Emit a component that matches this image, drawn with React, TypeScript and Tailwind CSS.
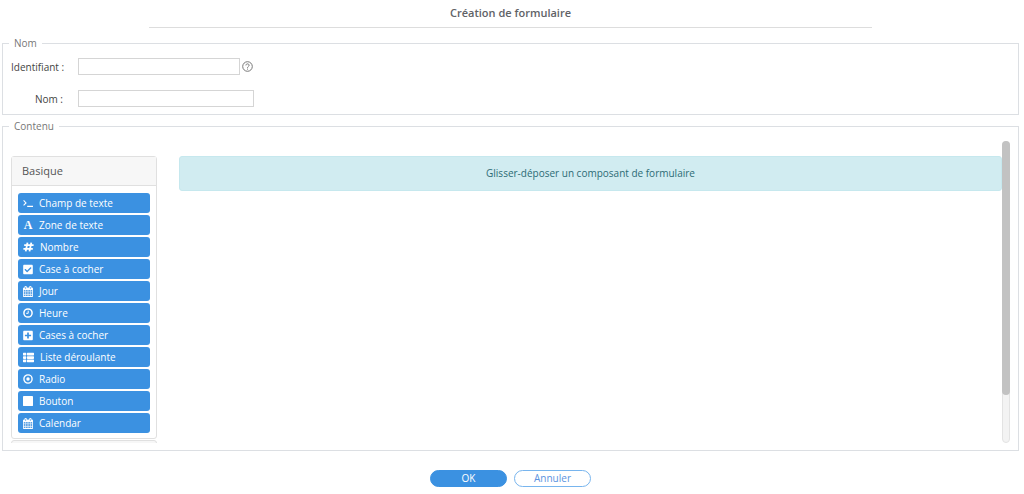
import React, { useState } from "react";
import { FaCheckSquare, FaPlusSquare, FaThList } from "react-icons/fa";

const TerminalIcon = () => (
  <svg width="10" height="10" viewBox="0 0 10 10" fill="none" stroke="currentColor" strokeWidth="1.1">
    <path d="M0.6 2.4L3 4.9L0.6 7.4M4.2 8.4H10" />
  </svg>
);

const HashIcon = () => (
  <svg width="11" height="10" viewBox="0 0 11 10" fill="none" stroke="currentColor" strokeWidth="1.8">
    <path d="M4.5 0.6L2.7 9.4M8.3 0.6L6.5 9.4M1.2 3.2H10.6M0.4 6.8H9.8" />
  </svg>
);

const CalendarIcon = () => (
  <svg width="10" height="11" viewBox="64 0 1664 1792" fill="currentColor">
    <path d="M192 1664h288v-288h-288v288zm352 0h320v-288h-320v288zm-352-352h288v-320h-288v320zm352 0h320v-320h-320v320zm-352-384h288v-288h-288v288zm736 736h320v-288h-320v288zm-384-736h320v-288h-320v288zm768 736h288v-288h-288v288zm-384-352h320v-320h-320v320zm-352-864v-288q0-13-9.5-22.5t-22.5-9.5h-64q-13 0-22.5 9.5t-9.5 22.5v288q0 13 9.5 22.5t22.5 9.5h64q13 0 22.5-9.5t9.5-22.5zm736 864h288v-320h-288v320zm-384-384h320v-288h-320v288zm384 0h288v-288h-288v288zm32-480v-288q0-13-9.5-22.5t-22.5-9.5h-64q-13 0-22.5 9.5t-9.5 22.5v288q0 13 9.5 22.5t22.5 9.5h64q13 0 22.5-9.5t9.5-22.5zm384-64v1280q0 52-38 90t-90 38h-1408q-52 0-90-38t-38-90v-1280q0-52 38-90t90-38h128v-96q0-66 47-113t113-47h64q66 0 113 47t47 113v96h384v-96q0-66 47-113t113-47h64q66 0 113 47t47 113v96h128q52 0 90 38t38 90z" stroke="currentColor" strokeWidth="40" />
  </svg>
);

const ClockIcon = () => (
  <svg width="10" height="10" viewBox="0 0 10 10" fill="none" stroke="currentColor">
    <circle cx="5" cy="5" r="4.1" strokeWidth="1.5" />
    <path d="M5.2 2.6V5.3H3.2" strokeWidth="1" />
  </svg>
);

const RadioIcon = () => (
  <svg width="10" height="10" viewBox="0 0 10 10" fill="none" stroke="currentColor">
    <circle cx="5" cy="5" r="4.1" strokeWidth="1.4" />
    <circle cx="5" cy="5" r="1.7" fill="currentColor" stroke="none" />
  </svg>
);

const StopIcon = () => (
  <svg width="10" height="10" viewBox="0 0 10 10" fill="currentColor">
    <rect x="0" y="0" width="10" height="10" rx="0.4" />
  </svg>
);

const HelpIcon = () => (
  <svg width="11" height="11" viewBox="0 0 11 11" fill="none" stroke="currentColor" strokeWidth="1">
    <circle cx="5.5" cy="5.5" r="4.8" />
    <path d="M3.9 4.4C3.9 2.4 7.1 2.4 7.1 4.3C7.1 5.5 5.5 5.5 5.5 6.8M5.5 7.6V8.6" />
  </svg>
);

const components = [
  { label: "Champ de texte", icon: <TerminalIcon /> },
  { label: "Zone de texte", icon: <span aria-hidden="true" className="w-2.5 text-center font-['Liberation_Serif',serif] text-[12px] font-bold">A</span> },
  { label: "Nombre", icon: <HashIcon /> },
  { label: "Case à cocher", icon: <FaCheckSquare className="h-[11px] w-2.5" /> },
  { label: "Jour", icon: <CalendarIcon /> },
  { label: "Heure", icon: <ClockIcon /> },
  { label: "Cases à cocher", icon: <FaPlusSquare className="h-[11px] w-2.5" /> },
  { label: "Liste déroulante", icon: <FaThList size={11} /> },
  { label: "Radio", icon: <RadioIcon /> },
  { label: "Bouton", icon: <StopIcon /> },
  { label: "Calendar", icon: <CalendarIcon /> },
];

export default function App() {
  const [identifier, setIdentifier] = useState("");
  const [name, setName] = useState("");

  return (
    <form
      onSubmit={(e) => e.preventDefault()}
      className="bg-white pl-0.5 pr-[5px] font-['Open_Sans',sans-serif] text-[10px] leading-4 text-[#444]"
    >
      <h1 className="mx-auto w-[71%] border-b border-[#ddd] pt-[5px] pb-1.5 text-center text-[11px] leading-4 font-semibold text-[#606266]">
        Création de formulaire
      </h1>

      <fieldset className="mt-[7px] border border-[#dcdfe3] px-2 pb-[7px]">
        <legend className="ml-[-2px] px-[5px] text-[#777]">Nom</legend>
        <div className="mt-[7px] flex items-center">
          <label htmlFor="identifier" className="w-[52px] text-right whitespace-nowrap">Identifiant :</label>
          <input
            id="identifier"
            type="text"
            value={identifier}
            onChange={(e) => setIdentifier(e.target.value)}
            className="ml-[15px] h-[17px] w-[162px] border border-[#d5d5d5] px-1 outline-none"
          />
          <button type="button" aria-label="Aide" className="ml-0.5 text-[#777]">
            <HelpIcon />
          </button>
        </div>
        <div className="mt-[15px] flex items-center">
          <label htmlFor="name" className="w-[52px] text-right">Nom :</label>
          <input
            id="name"
            type="text"
            value={name}
            onChange={(e) => setName(e.target.value)}
            className="ml-[15px] h-[17px] w-[176px] border border-[#d5d5d5] px-1 outline-none"
          />
        </div>
      </fieldset>

      <fieldset className="mt-[3px] border border-[#dcdfe3] px-2 pb-[7px]">
        <legend className="ml-[-2px] px-[5px] text-[#777]">Contenu</legend>
        <div className="mt-[7px] flex h-[302px]">
          <div className="flex flex-1 items-start gap-[22px] overflow-hidden pt-[15px]">
            <div className="w-[146px] shrink-0">
              <section className="rounded-[3px] border border-[#e0e0e0]">
                <h2 className="border-b border-[#e0e0e0] bg-[#f7f7f7] px-2.5 py-1.5 text-[11px] leading-4 text-[#555]">Basique</h2>
                <div className="flex flex-col gap-0.5 px-1.5 pt-[7px] pb-[5px]">
                  {components.map((item) => (
                    <button
                      key={item.label}
                      type="button"
                      className="flex h-5 items-center gap-1.5 rounded-[3px] bg-[#3b91e1] px-[5px] text-[10px] font-medium text-white"
                    >
                      {item.icon}
                      {item.label}
                    </button>
                  ))}
                </div>
              </section>
              <section className="mt-px h-[30px] rounded-[3px] border border-[#e0e0e0] bg-[#f7f7f7]" />
            </div>
            <div className="flex-1 rounded-[3px] border border-[#c6e8ee] bg-[#d1ecf1] py-2 text-center leading-[17px] text-[#2c6b75]">
              Glisser-déposer un composant de formulaire
            </div>
          </div>
          <div className="w-2 rounded-full border border-[#e3e3e3] bg-[#f3f3f3]">
            <div className="-mx-px -mt-px h-[254px] rounded-full bg-[#c2c2c2]" />
          </div>
        </div>
      </fieldset>

      <div className="mt-[19px] flex justify-center gap-[7px]">
        <button type="submit" className="h-[17px] w-[77px] rounded-full border border-[#3b91e1] bg-[#3b91e1] leading-[15px] text-white">
          OK
        </button>
        <button type="button" className="h-[17px] w-[77px] rounded-full border border-[#78b5ee] bg-white leading-[15px] text-[#5c93e0]">
          Annuler
        </button>
      </div>
    </form>
  );
}
